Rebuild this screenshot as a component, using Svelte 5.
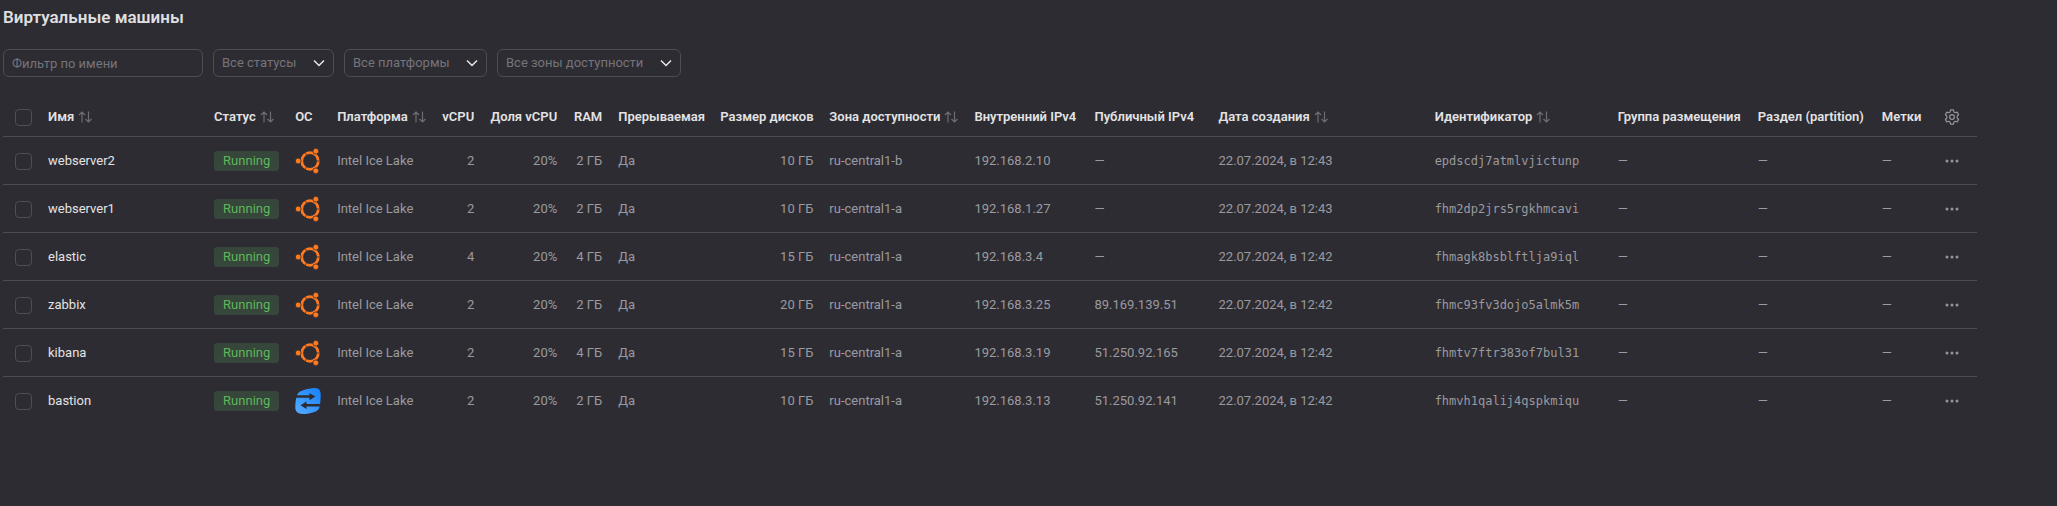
<script>
  const columns = [
    { key: 'name', label: 'Имя', width: 166, sort: true },
    { key: 'status', label: 'Статус', width: 81, sort: true },
    { key: 'os', label: 'ОС', width: 42 },
    { key: 'platform', label: 'Платформа', width: 105, sort: true },
    { key: 'cpu', label: 'vCPU', width: 48, right: true },
    { key: 'share', label: 'Доля vCPU', width: 83, right: true },
    { key: 'ram', label: 'RAM', width: 45, right: true },
    { key: 'preemptible', label: 'Прерываемая', width: 102 },
    { key: 'disk', label: 'Размер дисков', width: 109, right: true },
    { key: 'zone', label: 'Зона доступности', width: 145, sort: true },
    { key: 'internal', label: 'Внутренний IPv4', width: 120 },
    { key: 'external', label: 'Публичный IPv4', width: 124 },
    { key: 'created', label: 'Дата создания', width: 216, sort: true },
    { key: 'id', label: 'Идентификатор', width: 183, sort: true },
    { key: 'group', label: 'Группа размещения', width: 140 },
    { key: 'partition', label: 'Раздел (partition)', width: 124 },
    { key: 'tags', label: 'Метки', width: 62 }
  ];

  function vm(name, os, cpu, ram, disk, zone, internal, external, time, id) {
    return {
      name, os, cpu, id, internal, external,
      platform: 'Intel Ice Lake',
      share: '20%',
      ram: `${ram} ГБ`,
      preemptible: 'Да',
      disk: `${disk} ГБ`,
      zone: `ru-central1-${zone}`,
      created: `22.07.2024, в ${time}`,
      group: '—', partition: '—', tags: '—'
    };
  }

  const machines = [
    vm('webserver2', 'ubuntu', 2, 2, 10, 'b', '192.168.2.10', '—', '12:43', 'epdscdj7atmlvjictunp'),
    vm('webserver1', 'ubuntu', 2, 2, 10, 'a', '192.168.1.27', '—', '12:43', 'fhm2dp2jrs5rgkhmcavi'),
    vm('elastic', 'ubuntu', 4, 4, 15, 'a', '192.168.3.4', '—', '12:42', 'fhmagk8bsblftlja9iql'),
    vm('zabbix', 'ubuntu', 2, 2, 20, 'a', '192.168.3.25', '89.169.139.51', '12:42', 'fhmc93fv3dojo5almk5m'),
    vm('kibana', 'ubuntu', 2, 4, 15, 'a', '192.168.3.19', '51.250.92.165', '12:42', 'fhmtv7ftr383of7bul31'),
    vm('bastion', 'nat', 2, 2, 10, 'a', '192.168.3.13', '51.250.92.141', '12:42', 'fhmvh1qalij4qspkmiqu')
  ];

  const filters = ['Все статусы', 'Все платформы', 'Все зоны доступности'];
</script>

<main>
  <h1>Виртуальные машины</h1>

  <div class="filters">
    <input class="field" type="text" placeholder="Фильтр по имени" aria-label="Фильтр по имени" />
    {#each filters as filter}
      <div class="picker">
        <select class="field" aria-label={filter}>
          <option>{filter}</option>
        </select>
        <svg width="12" height="8" viewBox="0 0 12 8" aria-hidden="true">
          <path d="M1 1.5 6 6.5 11 1.5" />
        </svg>
      </div>
    {/each}
  </div>

  <div class="scroller">
    <table>
      <colgroup>
        <col style:width="37px" />
        {#each columns as column}
          <col style:width="{column.width}px" />
        {/each}
        <col style:width="41px" />
      </colgroup>
      <thead>
        <tr>
          <th class="check"><input type="checkbox" aria-label="Выбрать все" /></th>
          {#each columns as column}
            <th class:right={column.right}>
              {#if column.sort}
                <button class="sort">
                  {column.label}
                  <svg width="14" height="12" viewBox="0 0 14 12" aria-hidden="true">
                    <path d="M4 11.5V1M1 4 4 1 7 4M10.500.5V11M7.500 8l3 3 3-3" />
                  </svg>
                </button>
              {:else}
                {column.label}
              {/if}
            </th>
          {/each}
          <th>
            <button class="icon" aria-label="Настройки таблицы">
              <svg width="16" height="16" viewBox="0 0 16 16" aria-hidden="true">
                <path stroke-linejoin="round" d="M6.600.9h2.800l.5 2 1.300.8 2-.6 1.400 2.400L13.200 7v2l1.400 1.500-1.400 2.400-2-.6-1.300.8-.5 2H6.600l-.5-2-1.300-.8-2 .6-1.400-2.400L2.800 9V7L1.400 5.500l1.400-2.400 2 .6 1.300-.8z" />
                <circle cx="8" cy="8" r="2.400" />
              </svg>
            </button>
          </th>
        </tr>
      </thead>
      <tbody>
        {#each machines as machine}
          <tr>
            <td class="check"><input type="checkbox" aria-label="Выбрать {machine.name}" /></td>
            {#each columns as column}
              <td class={column.key} class:right={column.right}>
                {#if column.key === 'status'}
                  <span class="badge">Running</span>
                {:else if column.key === 'os'}
                  {#if machine.os === 'ubuntu'}
                    <svg class="logo" width="26" height="26" viewBox="0 0 26 26" role="img" aria-label="Ubuntu">
                      <circle cx="15" cy="13" r="8.300" fill="none" stroke="#ff7a1f" stroke-width="2.800" />
                      <path d="M21 13H26M11.800 7.500 9.300 3.100M11.800 18.500 9.300 22.900" stroke="#2d2c33" stroke-width=".8" />
                      <g fill="#ff7a1f" stroke="#2d2c33" stroke-width=".8">
                        <circle cx="3.200" cy="13" r="2.900" />
                        <circle cx="20.800" cy="3.200" r="2.900" />
                        <circle cx="20.800" cy="22.800" r="2.900" />
                      </g>
                    </svg>
                  {:else}
                    <svg class="logo" width="26" height="26" viewBox="0 0 26 26" role="img" aria-label="NAT">
                      <defs>
                        <linearGradient id="nat-fill" x1="0" y1="1" x2="1" y2="0">
                          <stop offset="0" stop-color="#58acff" />
                          <stop offset="1" stop-color="#1580ff" />
                        </linearGradient>
                      </defs>
                      <path fill="url(#nat-fill)" d="M8.500 2.200C12 1 17 0 20 .1c3.800.1 5.700 2.400 5.700 6.300 0 4.800-.4 9.600-1.300 13.100-.6 2.200-2 3.300-4.500 4.200-3.900 1.400-8.600 2.300-12 2.300C2.800 26 .3 23.700.3 19.600.3 14.500 1 9.500 2.300 6.400 3.300 4.100 5.500 3.200 8.500 2.200z" />
                      <path fill="#2d2c33" d="M1 7.300h13.500V5l6 3.600-6 3.700V9.800H1zM25.500 15.900H11.500v-2.300l-6 3.600 6 3.700v-2.500h14z" />
                    </svg>
                  {/if}
                {:else if column.key === 'name'}
                  <a href="#{machine.name}">{machine.name}</a>
                {:else}
                  {machine[column.key]}
                {/if}
              </td>
            {/each}
            <td>
              <button class="icon" aria-label="Действия: {machine.name}">
                <svg class="dots" width="16" height="16" viewBox="0 0 16 16" aria-hidden="true">
                  <circle cx="3" cy="8" r="1.500" />
                  <circle cx="8" cy="8" r="1.500" />
                  <circle cx="13" cy="8" r="1.500" />
                </svg>
              </button>
            </td>
          </tr>
        {/each}
      </tbody>
    </table>
  </div>
</main>

<style>
  :global(body) {
    background: #2d2c33;
  }

  main {
    box-sizing: border-box;
    min-height: 100vh;
    padding: 7px 80px 0 3px;
    color: #dfdfe0;
    font: 13px/18px Roboto, "Noto Sans", sans-serif;
  }

  h1 {
    margin: 0 0 22px;
    font-size: 17px;
    font-weight: 600;
    line-height: 20px;
  }

  button {
    padding: 0;
    border: 0;
    background: none;
    color: inherit;
    font: inherit;
    cursor: pointer;
  }

  svg {
    display: block;
  }

  .filters {
    display: flex;
    flex-wrap: wrap;
    gap: 10px;
    margin-bottom: 16px;
  }

  .field {
    box-sizing: border-box;
    height: 28px;
    margin: 0;
    padding: 0 8px;
    border: 1px solid #4e4d54;
    border-radius: 6px;
    background: transparent;
    color: #75747a;
    font: inherit;
    appearance: none;
  }

  input.field {
    width: 200px;
  }

  input::placeholder {
    color: #75747a;
    opacity: 1;
  }

  .picker {
    display: grid;
    align-items: center;
  }

  .picker > * {
    grid-area: 1 / 1;
  }

  .picker select {
    padding-right: 36px;
  }

  .picker svg {
    justify-self: end;
    margin-right: 9px;
    fill: none;
    stroke: #e8e8e9;
    stroke-width: 1.5;
    pointer-events: none;
  }

  .scroller {
    overflow-x: auto;
  }

  table {
    width: 100%;
    min-width: 1900px;
    border-collapse: separate;
    border-spacing: 0;
    table-layout: fixed;
  }

  th,
  td {
    box-sizing: border-box;
    height: 48px;
    padding: 0 8px;
    border-bottom: 1px solid #4d4c53;
    color: #9b9a9f;
    text-align: left;
    vertical-align: middle;
    white-space: nowrap;
  }

  th {
    height: 44px;
    padding-top: 4px;
    color: #e3e3e4;
    font-weight: 600;
  }

  tbody tr:last-child td {
    border-bottom-color: transparent;
  }

  .right {
    text-align: right;
  }

  .check {
    padding-top: 2px;
    padding-left: 12px;
  }

  th.check {
    padding-top: 6px;
  }

  .check input {
    display: block;
    box-sizing: border-box;
    width: 17px;
    height: 17px;
    margin: 0;
    border: 1px solid #4f4e55;
    border-radius: 4px;
    appearance: none;
  }

  .sort {
    display: flex;
    align-items: center;
    gap: 4px;
  }

  .sort svg {
    fill: none;
    stroke: #6e6d73;
    stroke-width: 1.2;
  }

  .icon {
    display: block;
  }

  .icon svg {
    fill: none;
    stroke: #959499;
    stroke-width: 1.2;
  }

  .icon .dots {
    fill: #959499;
    stroke: none;
  }

  a {
    color: #e3e3e4;
    text-decoration: none;
  }

  .id {
    font-family: "DejaVu Sans Mono", monospace;
    font-size: 12px;
  }

  .badge {
    display: inline-block;
    padding: 0 9px;
    border-radius: 3px;
    background: #36463a;
    color: #5db65b;
    line-height: 20px;
  }
</style>
